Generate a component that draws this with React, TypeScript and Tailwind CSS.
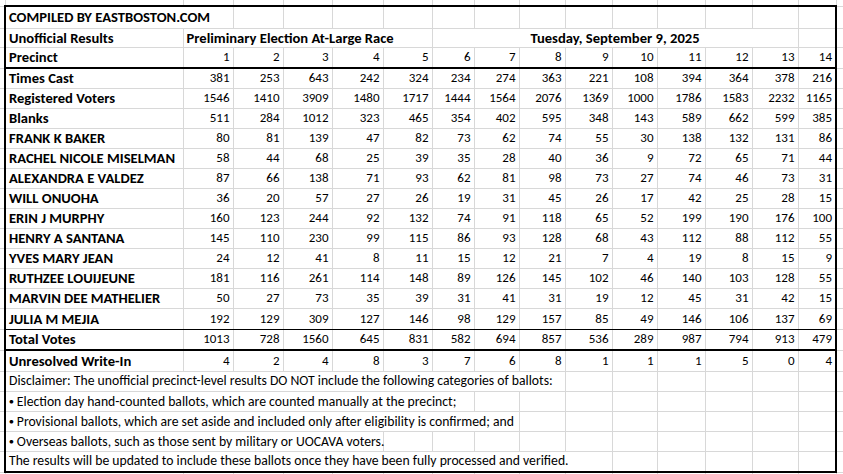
import React from "react";

const precincts = [1, 2, 3, 4, 5, 6, 7, 8, 9, 10, 11, 12, 13, 14];

const rows: [string, number[]][] = [
  ["Times Cast", [381, 253, 643, 242, 324, 234, 274, 363, 221, 108, 394, 364, 378, 216]],
  ["Registered Voters", [1546, 1410, 3909, 1480, 1717, 1444, 1564, 2076, 1369, 1000, 1786, 1583, 2232, 1165]],
  ["Blanks", [511, 284, 1012, 323, 465, 354, 402, 595, 348, 143, 589, 662, 599, 385]],
  ["FRANK K BAKER", [80, 81, 139, 47, 82, 73, 62, 74, 55, 30, 138, 132, 131, 86]],
  ["RACHEL NICOLE MISELMAN", [58, 44, 68, 25, 39, 35, 28, 40, 36, 9, 72, 65, 71, 44]],
  ["ALEXANDRA E VALDEZ", [87, 66, 138, 71, 93, 62, 81, 98, 73, 27, 74, 46, 73, 31]],
  ["WILL ONUOHA", [36, 20, 57, 27, 26, 19, 31, 45, 26, 17, 42, 25, 28, 15]],
  ["ERIN J MURPHY", [160, 123, 244, 92, 132, 74, 91, 118, 65, 52, 199, 190, 176, 100]],
  ["HENRY A SANTANA", [145, 110, 230, 99, 115, 86, 93, 128, 68, 43, 112, 88, 112, 55]],
  ["YVES MARY JEAN", [24, 12, 41, 8, 11, 15, 12, 21, 7, 4, 19, 8, 15, 9]],
  ["RUTHZEE LOUIJEUNE", [181, 116, 261, 114, 148, 89, 126, 145, 102, 46, 140, 103, 128, 55]],
  ["MARVIN DEE MATHELIER", [50, 27, 73, 35, 39, 31, 41, 31, 19, 12, 45, 31, 42, 15]],
  ["JULIA M MEJIA", [192, 129, 309, 127, 146, 98, 129, 157, 85, 49, 146, 106, 137, 69]],
];

const totals = [1013, 728, 1560, 645, 831, 582, 694, 857, 536, 289, 987, 794, 913, 479];
const writeIns = [4, 2, 4, 8, 3, 7, 6, 8, 1, 1, 1, 5, 0, 4];

// disclaimer lines: text + how many columns (label + precincts) the text runs over
const notes: [string, number, boolean][] = [
  ["Disclaimer: The unofficial precinct-level results DO NOT include the following categories of ballots:", 9, false],
  ["Election day hand-counted ballots, which are counted manually at the precinct;", 7, true],
  ["Provisional ballots, which are set aside and included only after eligibility is confirmed; and", 8, true],
  ["Overseas ballots, such as those sent by military or UOCAVA voters.", 5, true],
  ["The results will be updated to include these ballots once they have been fully processed and verified.", 10, false],
];

const cell = "border border-[#d8d8d8] py-0 px-[3px] leading-[16px] whitespace-nowrap overflow-visible";
const head = "font-bold text-[14.6px]";

function Edge({ pos, extra = "" }: { pos: "left" | "right"; extra?: string }) {
  return pos === "left" ? (
    <td className={`${cell} border-l-0 border-r-2 border-r-black ${extra}`} />
  ) : (
    <td className={`${cell} border-r-0 ${extra}`} />
  );
}

function Blank({ n, extra = "" }: { n: number; extra?: string }) {
  return (
    <>
      {Array.from({ length: n }).map((_, i) => (
        <td
          key={i}
          className={`${cell} ${extra} ${i === n - 1 ? "border-r-2 border-r-black" : ""}`}
        />
      ))}
    </>
  );
}

export default function App() {
  return (
    <div className="w-[843px] h-[474px] overflow-hidden bg-white text-black font-[Calibri,Carlito,Lato,sans-serif] text-[13px]">
      <table className="table-fixed border-collapse w-[843px]">
        <colgroup>
          <col className="w-[5px]" />
          <col className="w-[178px]" />
          <col className="w-[50px]" />
          <col className="w-[50px]" />
          <col className="w-[49px]" />
          <col className="w-[51px]" />
          <col className="w-[49px]" />
          <col className="w-[42px]" />
          <col className="w-[45px]" />
          <col className="w-[46px]" />
          <col className="w-[47px]" />
          <col className="w-[45px]" />
          <col className="w-[48px]" />
          <col className="w-[47px]" />
          <col className="w-[46px]" />
          <col className="w-[38px]" />
          <col className="w-[7px]" />
        </colgroup>
        <tbody>
          {/* sheet gridlines above the block */}
          <tr className="h-[6px]">
            <td className={`${cell} border-t-0 border-l-0`} />
            {Array.from({ length: 15 }).map((_, i) => (
              <td key={i} className={`${cell} border-t-0 border-b-2 border-b-black`} />
            ))}
            <td className={`${cell} border-t-0 border-r-0`} />
          </tr>

          <tr className="h-[22px]">
            <Edge pos="left" />
            <td colSpan={2} className={`${cell} ${head} border-t-2 border-t-black border-l-2 border-l-black text-left`}>
              COMPILED BY EASTBOSTON.COM
            </td>
            <Blank n={13} extra="border-t-2 border-t-black" />
            <Edge pos="right" />
          </tr>

          <tr className="h-[19px]">
            <Edge pos="left" />
            <td className={`${cell} ${head} border-l-2 border-l-black`}>Unofficial Results</td>
            <td colSpan={5} className={`${cell} ${head}`}>
              Preliminary Election At-Large Race
            </td>
            <td colSpan={8} className={`${cell} ${head} text-center`}>
              Tuesday, September 9, 2025
            </td>
            <Blank n={1} />
            <Edge pos="right" />
          </tr>

          <tr className="h-[21px]">
            <Edge pos="left" />
            <td className={`${cell} ${head} border-l-2 border-l-black border-b-2 border-b-black`}>Precinct</td>
            {precincts.map((p) => (
              <td
                key={p}
                className={`${cell} border-b-2 border-b-black text-right ${p === 14 ? "border-r-2 border-r-black" : ""}`}
              >
                {p}
              </td>
            ))}
            <Edge pos="right" />
          </tr>

          {rows.map(([label, values], r) => {
            const last = r === rows.length - 1;
            return (
              <tr key={label} className={last ? "h-[21px]" : "h-[20px]"}>
                <Edge pos="left" />
                <td className={`${cell} ${head} border-l-2 border-l-black ${last ? "border-b-black" : ""}`}>
                  {label}
                </td>
                {values.map((v, i) => (
                  <td
                    key={i}
                    className={`${cell} text-right ${last ? "border-b-black" : ""} ${i === 13 ? "border-r-2 border-r-black" : ""}`}
                  >
                    {v}
                  </td>
                ))}
                <Edge pos="right" />
              </tr>
            );
          })}

          <tr className="h-[21px]">
            <Edge pos="left" />
            <td className={`${cell} ${head} border-l-2 border-l-black border-t-black border-b-2 border-b-black`}>
              Total Votes
            </td>
            {totals.map((v, i) => (
              <td
                key={i}
                className={`${cell} text-right border-t-black border-b-2 border-b-black ${i === 13 ? "border-r-2 border-r-black" : ""}`}
              >
                {v}
              </td>
            ))}
            <Edge pos="right" />
          </tr>

          <tr className="h-[21px]">
            <Edge pos="left" />
            <td className={`${cell} ${head} border-l-2 border-l-black`}>Unresolved Write-In</td>
            {writeIns.map((v, i) => (
              <td key={i} className={`${cell} text-right ${i === 13 ? "border-r-2 border-r-black" : ""}`}>
                {v}
              </td>
            ))}
            <Edge pos="right" />
          </tr>

          {notes.map(([text, span, bullet], r) => {
            const last = r === notes.length - 1;
            const bottom = last ? "border-b-2 border-b-black" : "";
            return (
              <tr key={r} className={last ? "h-[21px]" : "h-[20px]"}>
                <Edge pos="left" />
                <td colSpan={span} className={`${cell} border-l-2 border-l-black text-[13.7px] ${bottom}`}>
                  {bullet && <span className="text-[8px] align-[2px] mr-[3px]">●</span>}
                  {text}
                </td>
                <Blank n={15 - span} extra={bottom} />
                <Edge pos="right" />
              </tr>
            );
          })}

          {/* sheet gridlines below the block */}
          <tr className="h-[5px]">
            <td className={`${cell} border-b-0 border-l-0`} />
            {Array.from({ length: 15 }).map((_, i) => (
              <td key={i} className={`${cell} border-b-0`} />
            ))}
            <td className={`${cell} border-b-0 border-r-0`} />
          </tr>
        </tbody>
      </table>
    </div>
  );
}
